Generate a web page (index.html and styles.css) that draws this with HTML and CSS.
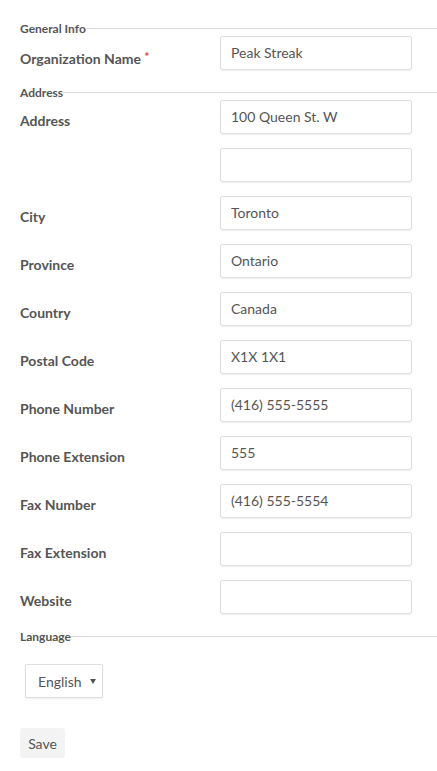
FILE: index.html
```html
<!DOCTYPE html>
<html lang="en">
<head>
<meta charset="utf-8">
<title>Organization</title>
<link rel="stylesheet" href="styles.css">
</head>
<body>
<form class="form">
  <section class="group">
    <div class="legend"><span>General Info</span></div>
    <div class="row">
      <label class="label">Organization Name <span class="req">*</span></label>
      <div class="fields"><input class="input" type="text" value="Peak Streak"></div>
    </div>
  </section>

  <section class="group">
    <div class="legend"><span>Address</span></div>
    <div class="row">
      <label class="label">Address</label>
      <div class="fields">
        <input class="input" type="text" value="100 Queen St. W">
        <input class="input" type="text" value="">
      </div>
    </div>
    <div class="row">
      <label class="label">City</label>
      <div class="fields"><input class="input" type="text" value="Toronto"></div>
    </div>
    <div class="row">
      <label class="label">Province</label>
      <div class="fields"><input class="input" type="text" value="Ontario"></div>
    </div>
    <div class="row">
      <label class="label">Country</label>
      <div class="fields"><input class="input" type="text" value="Canada"></div>
    </div>
    <div class="row">
      <label class="label">Postal Code</label>
      <div class="fields"><input class="input" type="text" value="X1X 1X1"></div>
    </div>
    <div class="row">
      <label class="label">Phone Number</label>
      <div class="fields"><input class="input" type="text" value="(416) 555-5555"></div>
    </div>
    <div class="row">
      <label class="label">Phone Extension</label>
      <div class="fields"><input class="input" type="text" value="555"></div>
    </div>
    <div class="row">
      <label class="label">Fax Number</label>
      <div class="fields"><input class="input" type="text" value="(416) 555-5554"></div>
    </div>
    <div class="row">
      <label class="label">Fax Extension</label>
      <div class="fields"><input class="input" type="text" value=""></div>
    </div>
    <div class="row">
      <label class="label">Website</label>
      <div class="fields"><input class="input" type="text" value=""></div>
    </div>
  </section>

  <section class="group group-lang">
    <div class="legend"><span>Language</span></div>
    <div class="select">
      <span class="select-text">English</span>
      <svg class="caret" width="6" height="5" viewBox="0 0 6 5"><path d="M0 0h6L3 5z" fill="#555"/></svg>
    </div>
  </section>

  <button class="save" type="button">Save</button>
</form>
</body>
</html>
```

FILE: styles.css
```css
* { box-sizing: border-box; }

html, body {
  margin: 0;
  padding: 0;
  background: #fff;
}

body {
  font-family: Lato, "Open Sans", "Liberation Sans", sans-serif;
  color: #555;
}

.form {
  padding: 20px 0 0 20px;
  display: flex;
  flex-direction: column;
}

.group {
  display: flex;
  flex-direction: column;
  gap: 14px;
  margin-bottom: 14px;
}

.legend {
  display: flex;
  align-items: center;
  height: 16px;
  margin-bottom: -14px;
  font-size: 12px;
  font-weight: 700;
  color: #555;
}

.legend::after {
  content: "";
  flex: 1;
  height: 1px;
  background: #dcdcdc;
}

.row {
  display: flex;
  align-items: flex-start;
}

.label {
  width: 200px;
  flex: none;
  padding-top: 12px;
  font-size: 14px;
  line-height: 17px;
  font-weight: 700;
  color: #555;
}

.req {
  color: #e8343a;
  font-size: 11px;
  vertical-align: 3px;
}

.fields {
  display: flex;
  flex-direction: column;
  gap: 14px;
}

.input {
  width: 192px;
  height: 34px;
  padding: 0 10px 1px;
  border: 1px solid #dedede;
  border-radius: 2px;
  box-shadow: 0 1px 2px rgba(0, 0, 0, 0.07);
  font-family: inherit;
  font-size: 14px;
  color: #555;
  background: #fff;
  outline: none;
}

.group-lang {
  gap: 20px;
  margin-bottom: 30px;
}

.group-lang .legend {
  margin-bottom: 0;
}

.select {
  margin-left: 5px;
  width: 78px;
  height: 34px;
  display: flex;
  align-items: center;
  padding: 0 6px 0 12px;
  border: 1px solid #dedede;
  border-radius: 2px;
  box-shadow: 0 1px 2px rgba(0, 0, 0, 0.07);
  font-size: 14px;
  color: #555;
}

.select-text {
  flex: 1;
}

.caret {
  display: block;
  flex: none;
}

.save {
  align-self: flex-start;
  width: 45px;
  height: 30px;
  padding: 0;
  border: none;
  border-radius: 3px;
  background: #f3f3f3;
  font-family: inherit;
  font-size: 14px;
  color: #555;
}
```
